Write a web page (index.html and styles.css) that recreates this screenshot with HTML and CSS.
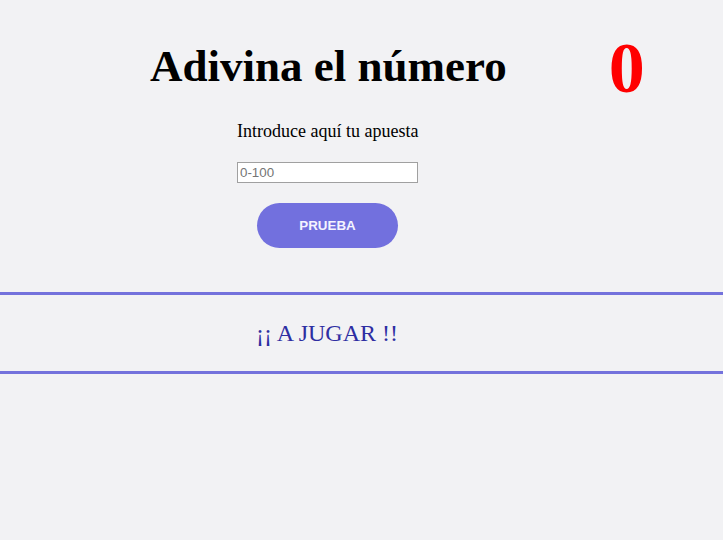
FILE: index.html
```html
<!DOCTYPE html>
<html lang="es">
<head>
<meta charset="utf-8">
<title>Adivina el número</title>
<link rel="stylesheet" href="styles.css">
</head>
<body>
<header class="header">
  <h1 class="title">Adivina el número</h1>
  <span class="score">0</span>
</header>
<main class="game">
  <p class="prompt">Introduce aquí tu apuesta</p>
  <input class="guess" type="text" placeholder="0-100">
  <button class="try" type="button">PRUEBA</button>
</main>
<section class="message">
  <p class="message-text">¡¡ A JUGAR !!</p>
</section>
</body>
</html>
```
FILE: styles.css
```css
html, body {
  margin: 0;
  padding: 0;
  background: #f2f2f4;
}
body {
  font-family: "Liberation Serif", "Times New Roman", serif;
  color: #000;
  min-height: 540px;
}
.header {
  display: flex;
  align-items: flex-start;
  padding: 27px 0 0 150px;
  gap: 102px;
  height: 92px;
  box-sizing: border-box;
}
.title {
  margin: 13px 0 0;
  font-size: 45px;
  font-weight: bold;
  line-height: normal;
}
.score {
  font-size: 72px;
  font-weight: bold;
  color: #ff0000;
  line-height: normal;
}
.game {
  display: flex;
  flex-direction: column;
  align-items: flex-start;
  padding-left: 237px;
}
.prompt {
  margin: 29px 0 0;
  font-size: 18px;
  line-height: normal;
}
.guess {
  margin-top: 20px;
  width: 181px;
  height: 21px;
  box-sizing: border-box;
  border: 1px solid #a0a0a0;
  padding: 1px 2px;
  font-family: "Liberation Sans", Arial, sans-serif;
  font-size: 13.33px;
  background: #fff;
}
.guess::placeholder {
  color: #757575;
}
.try {
  margin: 20px 0 0 20px;
  width: 141px;
  height: 45px;
  border: none;
  border-radius: 23px;
  background: #7270de;
  color: #f4f4ff;
  font-family: "Liberation Sans", Arial, sans-serif;
  font-size: 13.33px;
  font-weight: bold;
}
.message {
  margin-top: 44px;
  border-top: 3px solid #7472dc;
  border-bottom: 3px solid #7472dc;
  padding: 25px 0 24px 256px;
}
.message-text {
  margin: 0;
  font-size: 24px;
  line-height: normal;
  color: #2e2ea2;
}
```
